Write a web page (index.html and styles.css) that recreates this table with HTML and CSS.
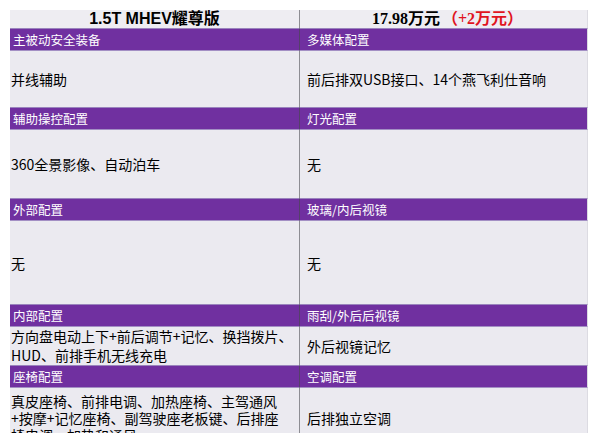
FILE: index.html
```html
<!DOCTYPE html>
<html lang="zh-CN">
<head>
<meta charset="utf-8">
<title>1.5T MHEV耀尊版 配置</title>
<link rel="stylesheet" href="styles.css">
</head>
<body>
<div class="sheet">
  <div class="grid">
    <div class="cell head">1.5T MHEV耀尊版</div>
    <div class="cell head r"><span class="price">17.98万元</span><span class="red">（+2万元）</span></div>

    <div class="cell cat">主被动安全装备</div>
    <div class="cell cat r">多媒体配置</div>
    <div class="cell val">并线辅助</div>
    <div class="cell val r">前后排双USB接口、14个燕飞利仕音响</div>

    <div class="cell cat">辅助操控配置</div>
    <div class="cell cat r">灯光配置</div>
    <div class="cell val">360全景影像、自动泊车</div>
    <div class="cell val r">无</div>

    <div class="cell cat">外部配置</div>
    <div class="cell cat r">玻璃/内后视镜</div>
    <div class="cell val">无</div>
    <div class="cell val r">无</div>

    <div class="cell cat">内部配置</div>
    <div class="cell cat r">雨刮/外后后视镜</div>
    <div class="cell val multi">方向盘电动上下+前后调节+记忆、换挡拨片、<br>HUD、前排手机无线充电</div>
    <div class="cell val r">外后视镜记忆</div>

    <div class="cell cat">座椅配置</div>
    <div class="cell cat r">空调配置</div>
    <div class="cell val tight">真皮座椅、前排电调、加热座椅、主驾通风<br>+按摩+记忆座椅、副驾驶座老板键、后排座<br>椅电调、加热和通风</div>
    <div class="cell val r">后排独立空调</div>
  </div>
</div>
</body>
</html>
```

FILE: styles.css
```css
html, body {
  margin: 0;
  padding: 0;
  background: #ffffff;
}

.sheet {
  margin: 10px 0 0 10px;
  width: 578px;
  height: 423px;
  overflow: hidden;
}

.grid {
  display: grid;
  grid-template-columns: 289px 289px;
  grid-template-rows: 18px 23px 56px 23px 68px 23px 83px 23px 38px 23px 60px;
  font-family: "Noto Sans CJK SC", "Liberation Sans", sans-serif;
  color: #000000;
}

.cell {
  box-sizing: border-box;
  display: flex;
  align-items: center;
  overflow: hidden;
  white-space: nowrap;
}

.cell.r {
  border-left: 1px solid #8d8d93;
  border-right: 1px solid #dcdbe2;
}

.head {
  background: #eeedf2;
  justify-content: center;
  font-weight: bold;
  font-size: 16px;
  line-height: 18px;
  font-family: "Liberation Sans", "Noto Sans CJK SC", sans-serif;
}

.head.r {
  font-family: "Liberation Serif", "Noto Sans CJK SC", serif;
  padding-left: 8px;
}

.red {
  color: #e0141e;
  margin-left: 2px;
}

.cat {
  background: #7030a0;
  color: #ffffff;
  font-size: 12.5px;
  line-height: 20px;
  padding-left: 3px;
  border-top: 1px solid #9a84bd;
  border-bottom: 1px solid #a38fc4;
}

.cat.r {
  padding-left: 7px;
  border-left-color: #55406a;
}

.val {
  background: #ebeaf0;
  font-size: 14px;
  line-height: 22px;
  padding-left: 1px;
}

.val.r {
  padding-left: 7px;
}

.val.multi {
  line-height: 19px;
}

.val.tight {
  line-height: 17px;
}
```
